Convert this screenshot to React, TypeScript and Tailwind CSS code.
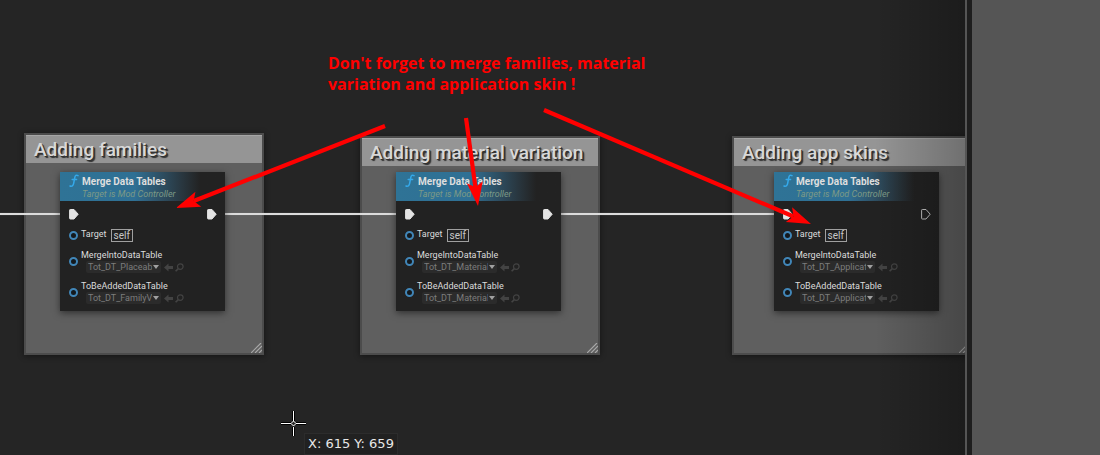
import { useId } from "react";

type GraphNode = {
  title: string;
  comment: string;
  node: string;
  tables: [string, string];
  linked: boolean;
};

const GROUPS: GraphNode[] = [
  {
    title: "Adding families",
    comment: "left-[24px] top-[133px] h-[222px]",
    node: "left-[60px]",
    tables: ["Tot_DT_PlaceableVariation", "Tot_DT_FamilyVariation"],
    linked: true,
  },
  {
    title: "Adding material variation",
    comment: "left-[360px] top-[136px] h-[219px]",
    node: "left-[396px]",
    tables: ["Tot_DT_MaterialVariation", "Tot_DT_MaterialVariation"],
    linked: true,
  },
  {
    title: "Adding app skins",
    comment: "left-[732px] top-[136px] h-[219px]",
    node: "left-[774px]",
    tables: ["Tot_DT_ApplicationSkin", "Tot_DT_ApplicationSkin"],
    linked: false,
  },
];

const WIRES = ["left-0 w-[60px]", "left-[225px] w-[171px]", "left-[561px] w-[213px]"];

function ExecPin({ filled }: { filled: boolean }) {
  return (
    <svg width="10" height="11" viewBox="0 0 10 11" aria-hidden="true">
      <path
        d="M.6 1.2 Q.6 .5 1.3 .5 H5 L9.2 5.2 L5 10 H1.3 Q.6 10 .6 9.3 Z"
        fill={filled ? "#e4e4e4" : "none"}
        stroke={filled ? "#e4e4e4" : "#c4c4c4"}
        strokeWidth="1"
      />
    </svg>
  );
}

function DataPin() {
  return <span className="size-[9px] shrink-0 rounded-full border-2 border-[#4186b8] bg-[#14191d]" />;
}

function TableInput({ label, value }: { label: string; value: string }) {
  const id = useId();
  return (
    <div className="flex items-center gap-[3px]">
      <DataPin />
      <div>
        <label htmlFor={id} className="block text-[9px] leading-[11px] text-[#dcdcdc]">
          {label}
        </label>
        <div className="flex items-center pl-[5px]">
          <div className="relative">
            <select
              id={id}
              className="block h-3 w-[75px] appearance-none overflow-hidden rounded-xs bg-[#2b2b2b] pr-[9px] pl-[2px] text-[9px] leading-3 text-clip whitespace-nowrap text-[#7c7c7c] outline-none"
            >
              <option>{value}</option>
            </select>
            <svg className="pointer-events-none absolute top-1 right-[2px]" width="6" height="4" aria-hidden="true">
              <path d="M0 0H6L3 4Z" fill="#a0a0a0" />
            </svg>
          </div>
          <button type="button" aria-label={`Use selected asset for ${label}`} className="ml-[3px]">
            <svg width="9" height="9" viewBox="0 0 9 9" className="block" aria-hidden="true">
              <path d="M0 4.5L4.5 .5V3H9V6H4.5V8.5Z" fill="#434343" />
            </svg>
          </button>
          <button type="button" aria-label={`Browse to ${label}`} className="ml-[2px]">
            <svg width="9" height="9" viewBox="0 0 9 9" className="block" aria-hidden="true">
              <circle cx="5.3" cy="3.6" r="2.8" fill="none" stroke="#434343" strokeWidth="1.2" />
              <path d="M3.3 5.6L.6 8.3" stroke="#434343" strokeWidth="1.6" />
            </svg>
          </button>
        </div>
      </div>
    </div>
  );
}

function Comment({ title, place }: { title: string; place: string }) {
  return (
    <section
      className={`absolute w-[240px] border-2 border-[#4c4c4c] bg-[#5f5f5f] shadow-[0_1px_6px_rgba(0,0,0,0.45)] ${place}`}
    >
      <h2 className="h-[28px] border-t border-[#a6a6a6] bg-[#959595] pl-2 text-[19px] leading-[28px] font-medium whitespace-nowrap text-[#d8d8d8] [text-shadow:1px_1px_0_#303030,2px_2px_1px_#303030]">
        {title}
      </h2>
      <svg className="absolute right-0 bottom-0" width="11" height="10" aria-hidden="true">
        <path d="M0 10L10 0M4 10L11 3M8 10L11 7" stroke="#a8a8a8" strokeWidth="1.2" />
      </svg>
    </section>
  );
}

function MergeNode({ place, tables, linked }: { place: string; tables: [string, string]; linked: boolean }) {
  return (
    <article className={`absolute top-[172px] h-[139px] w-[165px] bg-[#222222] shadow-[0_2px_7px_rgba(0,0,0,0.5)] ${place}`}>
      <header className="flex h-[29px] gap-[3px] bg-linear-to-r from-[#2f7396] from-0% via-[#2f7094] via-45% to-[#222222] to-85% pl-[9px]">
        <svg width="10" height="14" viewBox="0 0 10 14" className="mt-[2px]" fill="none" aria-hidden="true">
          <path
            d="M9 1.6Q6.4 .2 5.8 3.4L4.6 9.6Q4 12.8 1 12M3.2 5.4H7.6"
            stroke="#35a9ea"
            strokeWidth="1.5"
            strokeLinecap="round"
          />
        </svg>
        <div className="pt-[3px] whitespace-nowrap">
          <h3 className="text-[10px] leading-[13px] font-bold text-[#dedede]">Merge Data Tables</h3>
          <p className="text-[9px] leading-3 text-[#7d9a86] italic">Target is Mod Controller</p>
        </div>
      </header>
      <div className="flex justify-between pt-2 pr-2 pl-[9px]">
        <ExecPin filled />
        <ExecPin filled={linked} />
      </div>
      <div className="pl-[9px]">
        <div className="flex items-center gap-[3px] pt-[8px]">
          <DataPin />
          <span className="pb-[2px] text-[9px] leading-[13px] text-[#dcdcdc]">Target</span>
          <span className="ml-[1px] border border-[#a0a0a0] px-[2px] text-[10px] leading-[11px] text-[#c8c8c8]">self</span>
        </div>
        <div className="flex flex-col gap-2 pt-[7px]">
          <TableInput label="MergeIntoDataTable" value={tables[0]} />
          <TableInput label="ToBeAddedDataTable" value={tables[1]} />
        </div>
      </div>
    </article>
  );
}

function Arrow({ from, to }: { from: [number, number]; to: [number, number] }) {
  const length = Math.hypot(to[0] - from[0], to[1] - from[1]);
  const angle = (Math.atan2(to[1] - from[1], to[0] - from[0]) * 180) / Math.PI;
  return (
    <g transform={`translate(${to[0]} ${to[1]}) rotate(${angle})`} fill="#ff0000">
      <path d={`M${-length} -2.1H-19V2.1H${-length}Z`} />
      <path d="M0 0L-24 -8L-19 0L-24 8Z" />
    </g>
  );
}

export default function App() {
  return (
    <div className="flex h-screen overflow-hidden bg-[#1e1e1e] font-['Roboto',sans-serif]">
      <main className="relative min-w-0 flex-1 overflow-hidden bg-[#252525]">
        {GROUPS.map((g) => (
          <Comment key={g.title} title={g.title} place={g.comment} />
        ))}
        {WIRES.map((w) => (
          <div key={w} className={`absolute top-[213px] h-[2px] bg-[#dcdcdc] shadow-[0_0_1px_#909090] ${w}`} />
        ))}
        {GROUPS.map((g) => (
          <MergeNode key={g.title} place={g.node} tables={g.tables} linked={g.linked} />
        ))}
        <div className="pointer-events-none absolute inset-y-0 right-0 w-[90px] bg-linear-to-r from-transparent to-black/25" />
        <p className="absolute top-[53px] left-[328px] w-[330px] font-['Open_Sans',sans-serif] text-[16px] leading-[21px] font-bold text-[#ff0000]">
          Don't forget to merge families, material
          <br />
          variation and application skin !
        </p>
        <svg className="pointer-events-none absolute inset-0 size-full" aria-hidden="true">
          <Arrow from={[385, 126]} to={[176, 208]} />
          <Arrow from={[466, 118]} to={[478, 206]} />
          <Arrow from={[544, 110]} to={[811, 224]} />
          <g fill="none">
            <path d="M293.5 411V421M293.5 427V436M281 423.5H291M296 423.5H306" stroke="#000000" strokeWidth="3" />
            <path d="M293.5 411V421M293.5 427V436M281 423.5H291M296 423.5H306" stroke="#ffffff" strokeWidth="1" />
            <path d="M293.5 421L296 423.5L293.5 426L291 423.5Z" stroke="#ffffff" strokeWidth="1" />
          </g>
        </svg>
        <output className="absolute top-[433px] left-[304px] border border-[#2c2c2c] bg-[#212121] px-[3px] font-['DejaVu_Sans',sans-serif] text-[13px] leading-[20px] whitespace-nowrap text-[#e8e8e8]">
          X: 615 Y: 659
        </output>
      </main>
      <div className="w-[2px] bg-[#555555]" />
      <aside className="ml-[5px] w-[128px] bg-[#555555]" />
    </div>
  );
}
